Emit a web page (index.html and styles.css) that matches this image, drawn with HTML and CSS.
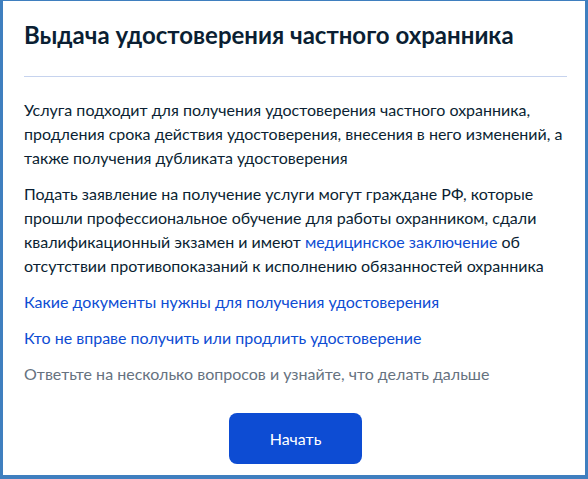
FILE: index.html
```html
<!DOCTYPE html>
<html lang="ru">
<head>
    <meta charset="UTF-8">
    <meta name="viewport" content="width=device-width, initial-scale=1.0">
    <title>Выдача удостоверения частного охранника</title>
    <link rel="stylesheet" href="styles.css">
</head>
<body>
    <div class="frame">
        <h1>Выдача удостоверения частного охранника</h1>
        <hr class="divider">

        <p>Услуга подходит для получения удостоверения частного охранника, продления срока действия удостоверения, внесения в него изменений, а также получения дубликата удостоверения</p>
        <p>Подать заявление на получение услуги могут граждане РФ, которые прошли профессиональное обучение для работы охранником, сдали квалификационный экзамен и имеют <a href="#">медицинское заключение</a> об отсутствии противопоказаний к исполнению обязанностей охранника</p>

        <a class="more" href="#">Какие документы нужны для получения удостоверения</a>
        <a class="more" href="#">Кто не вправе получить или продлить удостоверение</a>

        <p class="hint">Ответьте на несколько вопросов и узнайте, что делать дальше</p>

        <div class="actions">
            <button>Начать</button>
        </div>
    </div>
</body>
</html>
```

FILE: styles.css
```css
body {
    font-family: 'Lato', 'Liberation Sans', sans-serif;
    color: #0b1f33;
    margin: 0;
    padding: 0;
    background-color: #ffffff;
}

.frame {
    height: 479px;
    box-sizing: border-box;
    border-style: solid;
    border-color: #3f7fbf;
    border-width: 1px 3px 4px 3px;
    padding: 18px 18px 0 21px;
}
h1 {
    font-size: 24px;
    font-weight: 700;
    line-height: 32px;
    margin: 0;
}
.divider {
    border: none;
    height: 1px;
    background-color: #c6d3ee;
    margin: 25px 0 21px;
}
p {
    font-size: 16px;
    line-height: 24px;
    margin: 0 0 12px;
}
a {
    color: #0d4cd3;
    text-decoration: none;
}
.more {
    display: block;
    font-size: 16px;
    line-height: 24px;
    margin-bottom: 12px;
}
.hint {
    color: #66727f;
}
.actions {
    display: flex;
    justify-content: center;
    margin-top: 27px;
}
button {
    width: 133px;
    height: 51px;
    background-color: #0d4cd3;
    color: #ffffff;
    border: none;
    border-radius: 8px;
    font-family: 'Lato', 'Liberation Sans', sans-serif;
    font-size: 16px;
    cursor: pointer;
}
```
